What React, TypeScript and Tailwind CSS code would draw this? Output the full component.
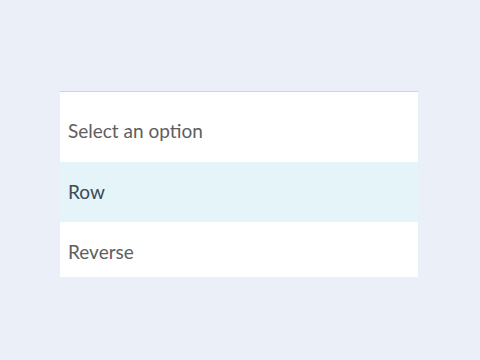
import React from "react";

const options = ["Row", "Reverse"];

export default function App() {
  return (
    <div
      className="w-[480px] h-[360px] bg-[#eaeff8] pt-[91px] pl-[60px]"
      style={{ fontFamily: "Lato, 'Open Sans', sans-serif" }}
    >
      <div className="w-[358px] border-t border-[#ccd3dd] bg-white flex flex-col">
        {/* Placeholder */}
        <div className="h-[70px] flex items-end pb-[17px] px-[8px] text-[19px] text-[#5e5e5e]">
          Select an option
        </div>
        {options.map((opt, i) => (
          <div
            key={opt}
            className={
              i === 0
                ? "h-[60px] flex items-center pt-[1px] px-[8px] text-[19px] text-[#3c4a57] bg-[#e4f4f8]"
                : "h-[55px] flex items-center pt-[5px] px-[8px] text-[19px] text-[#5e5e5e] bg-white"
            }
          >
            {opt}
          </div>
        ))}
      </div>
    </div>
  );
}
